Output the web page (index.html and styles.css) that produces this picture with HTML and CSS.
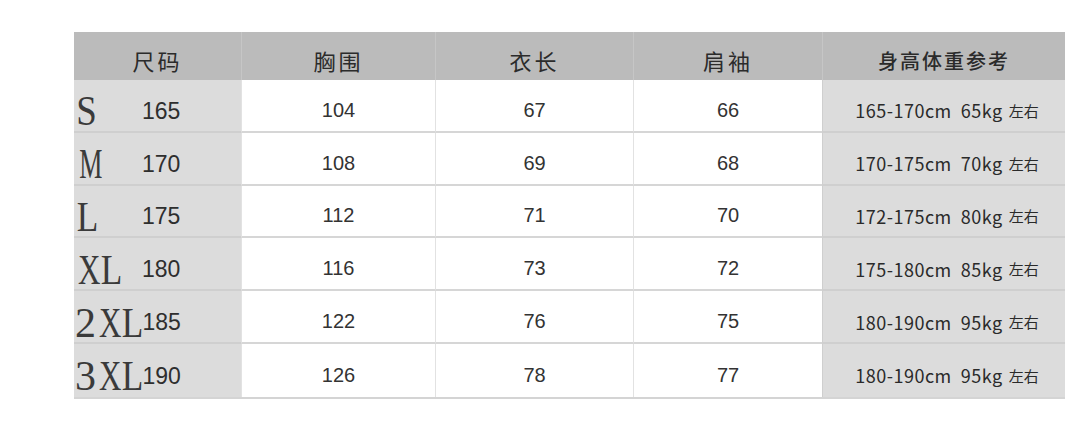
FILE: index.html
```html
<!DOCTYPE html>
<html lang="zh">
<head>
<meta charset="utf-8">
<title>尺码表</title>
<link rel="stylesheet" href="styles.css">
</head>
<body>
<div class="sheet">
  <div class="chart">
    <div class="cell head">尺码</div>
    <div class="cell head">胸围</div>
    <div class="cell head">衣长</div>
    <div class="cell head">肩袖</div>
    <div class="cell head ref">身高体重参考</div>

    <div class="cell size"><span class="lbl"><span class="ch ch-s">S</span></span><span class="ht">165</span></div>
    <div class="cell num">104</div>
    <div class="cell num">67</div>
    <div class="cell num">66</div>
    <div class="cell info">165-170cm&nbsp;&nbsp;65kg<span class="zy">左右</span></div>

    <div class="cell size"><span class="lbl"><span class="ch ch-m">M</span></span><span class="ht">170</span></div>
    <div class="cell num">108</div>
    <div class="cell num">69</div>
    <div class="cell num">68</div>
    <div class="cell info">170-175cm&nbsp;&nbsp;70kg<span class="zy">左右</span></div>

    <div class="cell size"><span class="lbl"><span class="ch ch-l">L</span></span><span class="ht">175</span></div>
    <div class="cell num">112</div>
    <div class="cell num">71</div>
    <div class="cell num">70</div>
    <div class="cell info">172-175cm&nbsp;&nbsp;80kg<span class="zy">左右</span></div>

    <div class="cell size"><span class="lbl"><span class="ch ch-x">X</span><span class="ch ch-l">L</span></span><span class="ht">180</span></div>
    <div class="cell num">116</div>
    <div class="cell num">73</div>
    <div class="cell num">72</div>
    <div class="cell info">175-180cm&nbsp;&nbsp;85kg<span class="zy">左右</span></div>

    <div class="cell size"><span class="lbl"><span class="ch ch-d">2</span><span class="ch ch-x">X</span><span class="ch ch-l">L</span></span><span class="ht">185</span></div>
    <div class="cell num">122</div>
    <div class="cell num">76</div>
    <div class="cell num">75</div>
    <div class="cell info">180-190cm&nbsp;&nbsp;95kg<span class="zy">左右</span></div>

    <div class="cell size"><span class="lbl"><span class="ch ch-d">3</span><span class="ch ch-x">X</span><span class="ch ch-l">L</span></span><span class="ht">190</span></div>
    <div class="cell num">126</div>
    <div class="cell num">78</div>
    <div class="cell num">77</div>
    <div class="cell info">180-190cm&nbsp;&nbsp;95kg<span class="zy">左右</span></div>
  </div>
</div>
</body>
</html>
```

FILE: styles.css
```css
html, body {
  margin: 0;
  padding: 0;
  background: #ffffff;
}

body {
  width: 1080px;
  height: 429px;
  overflow: hidden;
  font-family: "Liberation Sans", "Noto Sans CJK SC", sans-serif;
  color: #2a2a2a;
}

.sheet {
  padding: 32px 0 0 74px;
}

.chart {
  display: grid;
  grid-template-columns: 167px 194px 198px 189px 243px;
  grid-template-rows: 48px repeat(6, 52.8px);
  width: 991px;
  border-bottom: 2px solid #d4d4d4;
}

.cell {
  display: flex;
  align-items: center;
  justify-content: center;
  box-sizing: border-box;
  border-bottom: 2px solid #d6d6d6;
  border-left: 1px solid #e2e2e2;
  white-space: nowrap;
}

.chart > .cell:nth-child(5n+1) {
  border-left: none;
}

.chart > .cell:nth-last-child(-n+5) {
  border-bottom: none;
}

.head {
  background: #bbbbbb;
  border-bottom: none;
  border-left-color: #c6c6c6;
  padding-top: 8px;
  font-family: "Noto Sans CJK SC", sans-serif;
  font-size: 22px;
  letter-spacing: 3px;
  color: #2b2b2b;
}

.head.ref {
  font-size: 20px;
  letter-spacing: 2px;
  font-weight: 500;
}

.size {
  background: #dcdcdc;
  justify-content: flex-start;
  padding: 12px 0 0 1px;
  border-bottom-color: #cfcfcf;
}

.lbl {
  display: inline-flex;
  min-width: 67px;
  font-family: "Liberation Serif", serif;
  font-size: 42px;
  line-height: 1;
  color: #3a3a3a;
}

.ch {
  display: inline-block;
  width: 22.5px;
  text-align: center;
}

.ch-d { width: 21px; }
.ch-s { transform: scaleX(0.88); }
.ch-m { transform: scaleX(0.62); }
.ch-x { transform: scaleX(0.74); width: 24px; }
.ch-l { transform: scaleX(0.84); }

.ht {
  font-family: "Liberation Sans", sans-serif;
  font-size: 23px;
  color: #2e2e2e;
  margin-top: 0;
}

.num {
  background: #ffffff;
  padding-top: 10px;
  font-family: "Liberation Sans", sans-serif;
  font-size: 20px;
  color: #333333;
}

.info {
  background: #dcdcdc;
  padding: 10px 0 0 6px;
  font-family: "Noto Sans CJK SC", sans-serif;
  font-size: 18px;
  letter-spacing: 0.5px;
  color: #2a2a2a;
  border-left-color: #cfcfcf;
  border-bottom-color: #cfcfcf;
}

.zy {
  font-size: 15px;
  margin-left: 6px;
  letter-spacing: 0;
}
```
